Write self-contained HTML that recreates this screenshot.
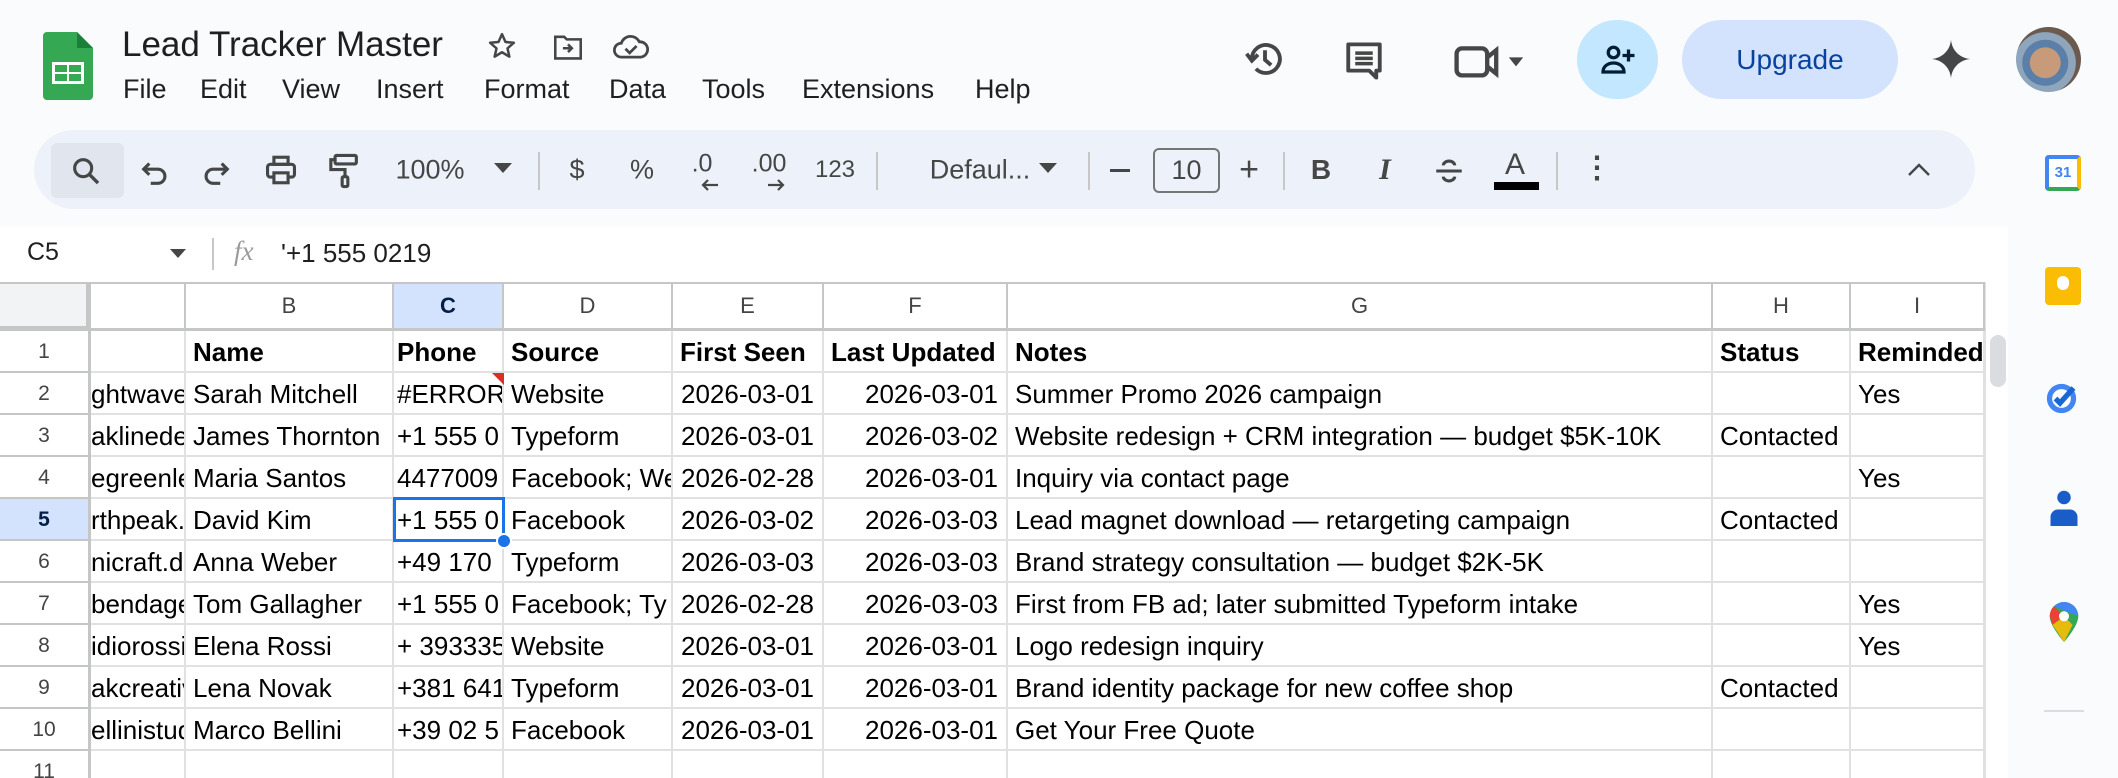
<!DOCTYPE html>
<html><head><meta charset="utf-8"><style>
*{margin:0;padding:0;box-sizing:border-box}
body{width:2118px;height:778px;overflow:hidden;background:#f9fbfd;font-family:"Liberation Sans",Arial,sans-serif;position:relative;color:#1f1f1f}
.a{position:absolute}
.menu span{position:absolute;top:74px;font-size:27px;color:#1f1f1f}
.tb{position:absolute;top:170px;transform:translate(-50%,-50%);font-size:27px;color:#444746}
.sep{position:absolute;top:152px;width:2px;height:38px;background:#c7c7c7}
.grid{position:absolute;left:0;top:282px;width:1985px;height:496px;background:#fff;overflow:hidden}
.row{position:absolute;left:0;width:1985px;height:42px}
.row div{position:absolute;top:0;height:42px;line-height:42px;font-size:26px;color:#000;white-space:nowrap;overflow:hidden;padding-left:7px;border-right:2px solid #e1e1e1;border-bottom:2px solid #e1e1e1}
.row .n{left:0;width:91px;padding:0;font-size:21px;color:#444;text-align:center;border-right:3px solid #c4c7c5;border-bottom:2px solid #c4c7c5}
.row .c0{left:91px;width:95px;text-align:right;padding:0 2px 0 0}
.row .c1{left:186px;width:208px}
.row .c2{left:394px;width:110px;padding-left:3px}
.row .c3{left:504px;width:169px}
.row .c4{left:673px;width:151px;text-align:right;padding:0 8px 0 0}
.row .c5{left:824px;width:184px;text-align:right;padding:0 8px 0 0}
.row .c6{left:1008px;width:705px}
.row .c7{left:1713px;width:138px}
.row .c8{left:1851px;width:134px}
.row.h div{font-weight:bold}
.row.h .c4,.row.h .c5{text-align:left;padding:0 0 0 7px}
.row.h .n{font-weight:normal}
.hd{position:absolute;top:0;height:49px;line-height:48px;font-size:22px;color:#444;text-align:center;border-right:2px solid #c4c7c5;border-bottom:3px solid #c4c7c5;background:#fff}
</style></head><body>
<svg class="a" style="left:43px;top:32px" width="50" height="68" viewBox="0 0 50 68"><path d="M4 0H34L50 16V64a4 4 0 0 1-4 4H4a4 4 0 0 1-4-4V4a4 4 0 0 1 4-4z" fill="#34a853"/><path d="M34 0V16H50z" fill="#188038"/><rect x="9" y="30" width="32" height="22" fill="#fff"/><rect x="12" y="33" width="12" height="7" fill="#34a853"/><rect x="26" y="33" width="12" height="7" fill="#34a853"/><rect x="12" y="42" width="12" height="7" fill="#34a853"/><rect x="26" y="42" width="12" height="7" fill="#34a853"/></svg>
<div class="a" style="left:122px;top:25px;font-size:35px;color:#1f1f1f">Lead Tracker Master</div>
<svg class="a" style="left:487px;top:31px" width="30" height="30" viewBox="0 0 24 24"><path d="M12 2.5l2.8 6.3 6.7.6-5.1 4.5 1.5 6.6L12 17l-5.9 3.5 1.5-6.6L2.5 9.4l6.7-.6z" fill="none" stroke="#444746" stroke-width="2" stroke-linejoin="round"/></svg>
<svg class="a" style="left:552px;top:33px" width="32" height="28" viewBox="0 0 24 22"><path d="M2 3h7l2 2h11v15H2z" fill="none" stroke="#444746" stroke-width="2"/><path d="M8 12h7M12 9l3 3-3 3" fill="none" stroke="#444746" stroke-width="2"/></svg>
<svg class="a" style="left:613px;top:32px" width="36" height="28" viewBox="0 0 26 20"><path d="M6 18a5 5 0 0 1 0-10 7 7 0 0 1 13-1 5.5 5.5 0 0 1 1 11z" fill="none" stroke="#444746" stroke-width="2"/><path d="M9 12l3 3 5-5" fill="none" stroke="#444746" stroke-width="2"/></svg>
<div class="menu">
<span style="left:123px">File</span><span style="left:200px">Edit</span><span style="left:282px">View</span><span style="left:376px">Insert</span><span style="left:484px">Format</span><span style="left:609px">Data</span><span style="left:702px">Tools</span><span style="left:802px">Extensions</span><span style="left:975px">Help</span>
</div>
<svg class="a" style="left:1244px;top:38px" width="42" height="42" viewBox="0 0 24 24"><path d="M4.5 12a8 8 0 1 1 2.3 5.6" fill="none" stroke="#444746" stroke-width="2.2"/><path d="M1.5 9l3 4 3.5-3.5" fill="none" stroke="#444746" stroke-width="2.2"/><path d="M12 7v5.5l3.5 3" fill="none" stroke="#444746" stroke-width="2.2"/></svg>
<svg class="a" style="left:1343px;top:39px" width="42" height="44" viewBox="0 0 24 25"><path d="M3 3h18v15H19v4l-4-4H3z" fill="none" stroke="#444746" stroke-width="2.2" stroke-linejoin="round"/><path d="M7 8h10M7 11h10M7 14h10" stroke="#444746" stroke-width="2"/></svg>
<svg class="a" style="left:1453px;top:43px" width="72" height="36" viewBox="0 0 40 20"><rect x="2" y="3" width="17" height="15" rx="3" fill="none" stroke="#444746" stroke-width="2.4"/><path d="M19 8l5-4v13l-5-4" fill="none" stroke="#444746" stroke-width="2.4"/><path d="M31 8h8l-4 5z" fill="#444746"/></svg>
<div class="a" style="left:1577px;top:20px;width:81px;height:79px;border-radius:40px;background:#c2e7ff"></div>
<svg class="a" style="left:1599px;top:42px" width="38" height="36" viewBox="0 0 24 24"><circle cx="9" cy="7" r="3.5" fill="none" stroke="#001d35" stroke-width="2.2"/><path d="M2 20c0-4 3.5-6 7-6s7 2 7 6z" fill="none" stroke="#001d35" stroke-width="2.2"/><path d="M19 5v8M15 9h8" stroke="#001d35" stroke-width="2.2"/></svg>
<div class="a" style="left:1682px;top:20px;width:216px;height:79px;border-radius:40px;background:#d3e3fd;color:#0842a0;font-size:28px;text-align:center;line-height:79px">Upgrade</div>
<svg class="a" style="left:1930px;top:38px" width="42" height="42" viewBox="0 0 24 24"><path d="M12 1C12.5 7 17 11.5 23 12 17 12.5 12.5 17 12 23 11.5 17 7 12.5 1 12 7 11.5 11.5 7 12 1z" fill="#444746"/></svg>
<div class="a" style="left:2016px;top:27px;width:65px;height:65px;border-radius:50%;background:radial-gradient(circle at 45% 55%,#c79a7a 0 30%,#5a7fa8 31% 45%,#8fa5bb 46% 60%,#6b5a4d 61%)"></div>
<div class="a" style="left:34px;top:130px;width:1941px;height:79px;border-radius:40px;background:#edf2fa"></div>
<div class="a" style="left:51px;top:143px;width:73px;height:55px;border-radius:6px;background:#e1e6ee"></div>
<svg class="a" style="left:69px;top:154px" width="34" height="34" viewBox="0 0 24 24"><circle cx="10" cy="10" r="6" fill="none" stroke="#444746" stroke-width="2.2"/><path d="M14.5 14.5l6 6" stroke="#444746" stroke-width="2.4"/></svg>
<svg class="a" style="left:138px;top:155px" width="34" height="34" viewBox="0 0 24 24"><path d="M8 6L4 10l4 4" fill="none" stroke="#444746" stroke-width="2.2"/><path d="M4 10h10a5 5 0 0 1 0 10H9" fill="none" stroke="#444746" stroke-width="2.2"/></svg>
<svg class="a" style="left:199px;top:155px" width="34" height="34" viewBox="0 0 24 24"><path d="M16 6l4 4-4 4" fill="none" stroke="#444746" stroke-width="2.2"/><path d="M20 10H10a5 5 0 0 0 0 10h5" fill="none" stroke="#444746" stroke-width="2.2"/></svg>
<svg class="a" style="left:264px;top:153px" width="34" height="34" viewBox="0 0 24 24"><rect x="7" y="3" width="10" height="5" fill="none" stroke="#444746" stroke-width="2.2"/><rect x="2.5" y="8" width="19" height="9" rx="2" fill="none" stroke="#444746" stroke-width="2.2"/><rect x="7" y="14" width="10" height="7" fill="#edf2fa" stroke="#444746" stroke-width="2.2"/></svg>
<svg class="a" style="left:328px;top:152px" width="34" height="38" viewBox="0 0 24 26"><rect x="5" y="2" width="15" height="6" rx="1" fill="none" stroke="#444746" stroke-width="2.2"/><path d="M5 5H2v7h10v5" fill="none" stroke="#444746" stroke-width="2.2"/><rect x="10" y="17" width="4" height="7" rx="1" fill="none" stroke="#444746" stroke-width="2.2"/></svg>
<div class="tb" style="left:430px">100%</div>
<svg class="a" style="left:494px;top:163px" width="18" height="12"><path d="M0 0h18l-9 10z" fill="#444746"/></svg>
<div class="sep" style="left:538px"></div>
<div class="tb" style="left:577px">$</div>
<div class="tb" style="left:642px">%</div>
<div class="tb" style="left:702px;font-size:25px;top:164px">.0</div>
<svg class="a" style="left:700px;top:178px" width="20" height="14" viewBox="0 0 20 14"><path d="M18 7H3M8 2L3 7l5 5" fill="none" stroke="#444746" stroke-width="2.2"/></svg>
<div class="tb" style="left:769px;font-size:25px;top:164px">.00</div>
<svg class="a" style="left:766px;top:178px" width="20" height="14" viewBox="0 0 20 14"><path d="M2 7h15M12 2l5 5-5 5" fill="none" stroke="#444746" stroke-width="2.2"/></svg>
<div class="tb" style="left:835px;font-size:24px">123</div>
<div class="sep" style="left:876px"></div>
<div class="tb" style="left:980px">Defaul...</div>
<svg class="a" style="left:1039px;top:163px" width="18" height="12"><path d="M0 0h18l-9 10z" fill="#444746"/></svg>
<div class="sep" style="left:1088px"></div>
<div class="a" style="left:1110px;top:169px;width:20px;height:3px;background:#444746"></div>
<div class="a" style="left:1153px;top:148px;width:67px;height:45px;border:2px solid #747775;border-radius:6px;font-size:27px;line-height:41px;text-align:center;color:#444746">10</div>
<div class="tb" style="left:1249px;font-size:34px">+</div>
<div class="sep" style="left:1283px"></div>
<div class="tb" style="left:1321px;font-size:28px;font-weight:bold">B</div>
<div class="tb" style="left:1385px;font-size:30px;font-style:italic;font-family:'Liberation Serif',serif;font-weight:bold">I</div>
<svg class="a" style="left:1432px;top:154px" width="34" height="34" viewBox="0 0 24 24"><path d="M3 12h18" stroke="#444746" stroke-width="2.2"/><path d="M8 8a4 3 0 0 1 8 0M8 16a4 3 0 0 0 8 0" fill="none" stroke="#444746" stroke-width="2.2"/></svg>
<div class="tb" style="left:1515px;top:165px;font-size:30px">A</div>
<div class="a" style="left:1494px;top:182px;width:45px;height:8px;background:#000"></div>
<div class="sep" style="left:1556px"></div>
<div class="tb" style="left:1597px;font-size:30px;top:168px;font-weight:bold">⋮</div>
<svg class="a" style="left:1907px;top:163px" width="24" height="14"><path d="M2 12L12 2l10 10" fill="none" stroke="#444746" stroke-width="2.4"/></svg>
<div class="a" style="left:0;top:226px;width:2008px;height:56px;background:#fff"></div>
<div class="a" style="left:27px;top:238px;font-size:25px">C5</div>
<svg class="a" style="left:170px;top:249px" width="16" height="10"><path d="M0 0h16l-8 9z" fill="#444746"/></svg>
<div class="a" style="left:212px;top:238px;width:2px;height:32px;background:#c7c7c7"></div>
<div class="a" style="left:234px;top:236px;font-size:27px;font-style:italic;color:#9a9a9a;font-family:'Liberation Serif',serif">fx</div>
<div class="a" style="left:281px;top:238px;font-size:26px">'+1 555 0219</div>
<div class="grid">
<div class="a" style="left:0;top:0;width:1985px;height:2px;background:#c4c7c5;z-index:2"></div>
<div class="hd" style="left:0;width:91px;background:#f1f3f4;border-right:5px solid #c4c7c5;border-bottom:5px solid #c4c7c5"></div>
<div class="hd" style="left:91px;width:95px"></div>
<div class="hd" style="left:186px;width:208px">B</div>
<div class="hd" style="left:394px;width:110px;background:#d3e3fd;font-weight:bold;color:#041e49">C</div>
<div class="hd" style="left:504px;width:169px">D</div>
<div class="hd" style="left:673px;width:151px">E</div>
<div class="hd" style="left:824px;width:184px">F</div>
<div class="hd" style="left:1008px;width:705px">G</div>
<div class="hd" style="left:1713px;width:138px">H</div>
<div class="hd" style="left:1851px;width:134px">I</div>

<div class="row h" style="top:49px"><div class="n">1</div><div class="c0"></div><div class="c1">Name</div><div class="c2">Phone</div><div class="c3">Source</div><div class="c4">First Seen</div><div class="c5">Last Updated</div><div class="c6">Notes</div><div class="c7">Status</div><div class="c8">Reminded</div></div>
<div class="row" style="top:91px"><div class="n">2</div><div class="c0">ghtwave</div><div class="c1">Sarah Mitchell</div><div class="c2">#ERROR</div><div class="c3">Website</div><div class="c4">2026-03-01</div><div class="c5">2026-03-01</div><div class="c6">Summer Promo 2026 campaign</div><div class="c7"></div><div class="c8">Yes</div></div>
<div class="row" style="top:133px"><div class="n">3</div><div class="c0">aklinedes</div><div class="c1">James Thornton</div><div class="c2">+1 555 0</div><div class="c3">Typeform</div><div class="c4">2026-03-01</div><div class="c5">2026-03-02</div><div class="c6">Website redesign + CRM integration — budget $5K-10K</div><div class="c7">Contacted</div><div class="c8"></div></div>
<div class="row" style="top:175px"><div class="n">4</div><div class="c0">egreenle</div><div class="c1">Maria Santos</div><div class="c2">4477009</div><div class="c3">Facebook; We</div><div class="c4">2026-02-28</div><div class="c5">2026-03-01</div><div class="c6">Inquiry via contact page</div><div class="c7"></div><div class="c8">Yes</div></div>
<div class="row" style="top:217px"><div class="n" style="background:#d3e3fd;font-weight:bold;color:#041e49">5</div><div class="c0">rthpeak.</div><div class="c1">David Kim</div><div class="c2">+1 555 0</div><div class="c3">Facebook</div><div class="c4">2026-03-02</div><div class="c5">2026-03-03</div><div class="c6">Lead magnet download — retargeting campaign</div><div class="c7">Contacted</div><div class="c8"></div></div>
<div class="row" style="top:259px"><div class="n">6</div><div class="c0">nicraft.de</div><div class="c1">Anna Weber</div><div class="c2">+49 170</div><div class="c3">Typeform</div><div class="c4">2026-03-03</div><div class="c5">2026-03-03</div><div class="c6">Brand strategy consultation — budget $2K-5K</div><div class="c7"></div><div class="c8"></div></div>
<div class="row" style="top:301px"><div class="n">7</div><div class="c0">bendage</div><div class="c1">Tom Gallagher</div><div class="c2">+1 555 0</div><div class="c3">Facebook; Ty</div><div class="c4">2026-02-28</div><div class="c5">2026-03-03</div><div class="c6">First from FB ad; later submitted Typeform intake</div><div class="c7"></div><div class="c8">Yes</div></div>
<div class="row" style="top:343px"><div class="n">8</div><div class="c0">idiorossi</div><div class="c1">Elena Rossi</div><div class="c2">+ 393335</div><div class="c3">Website</div><div class="c4">2026-03-01</div><div class="c5">2026-03-01</div><div class="c6">Logo redesign inquiry</div><div class="c7"></div><div class="c8">Yes</div></div>
<div class="row" style="top:385px"><div class="n">9</div><div class="c0">akcreativ</div><div class="c1">Lena Novak</div><div class="c2">+381 641</div><div class="c3">Typeform</div><div class="c4">2026-03-01</div><div class="c5">2026-03-01</div><div class="c6">Brand identity package for new coffee shop</div><div class="c7">Contacted</div><div class="c8"></div></div>
<div class="row" style="top:427px"><div class="n">10</div><div class="c0">ellinistud</div><div class="c1">Marco Bellini</div><div class="c2">+39 02 5</div><div class="c3">Facebook</div><div class="c4">2026-03-01</div><div class="c5">2026-03-01</div><div class="c6">Get Your Free Quote</div><div class="c7"></div><div class="c8"></div></div>
<div class="row" style="top:469px"><div class="n">11</div><div class="c0"></div><div class="c1"></div><div class="c2"></div><div class="c3"></div><div class="c4"></div><div class="c5"></div><div class="c6"></div><div class="c7"></div><div class="c8"></div></div>

<div class="a" style="left:492px;top:91px;width:0;height:0;border-left:12px solid transparent;border-top:12px solid #d93025"></div>
<div class="a" style="left:393px;top:215px;width:112px;height:45px;border:3px solid #1a73e8"></div>
<div class="a" style="left:496px;top:251px;width:16px;height:16px;border-radius:50%;background:#1a73e8;border:2px solid #fff"></div>
</div>
<div class="a" style="left:1985px;top:282px;width:23px;height:496px;background:#fff;border-left:1px solid #e1e1e1"></div>
<div class="a" style="left:1990px;top:335px;width:16px;height:52px;border-radius:8px;background:#dadce0"></div>
<div class="a" style="left:2045px;top:155px;width:36px;height:36px;border-radius:4px;background:#fff;border:4px solid #4285f4;border-bottom-color:#34a853;border-right-color:#fbbc04;font-size:15px;text-align:center;line-height:28px;color:#4285f4;font-weight:bold">31</div>
<div class="a" style="left:2045px;top:267px;width:36px;height:38px;border-radius:4px;background:#fbbc04"></div>
<div class="a" style="left:2057px;top:276px;width:12px;height:14px;border-radius:6px;background:#fff"></div>
<svg class="a" style="left:2045px;top:379px" width="36" height="36" viewBox="0 0 24 24"><circle cx="11" cy="13" r="8" fill="none" stroke="#4285f4" stroke-width="3.5"/><path d="M7 13l3 3 9-10" fill="none" stroke="#1967d2" stroke-width="3.5"/></svg>
<svg class="a" style="left:2049px;top:490px" width="30" height="36" viewBox="0 0 20 24"><circle cx="10" cy="5" r="4.5" fill="#1a5dc9"/><path d="M1 24v-6a5 5 0 0 1 5-5h8a5 5 0 0 1 5 5v6z" fill="#1a5dc9"/></svg>
<svg class="a" style="left:2049px;top:602px" width="30" height="40" viewBox="0 0 20 28"><path d="M10 0a10 10 0 0 1 10 10c0 7-10 18-10 18S0 17 0 10A10 10 0 0 1 10 0z" fill="#34a853"/><path d="M10 0a10 10 0 0 1 10 10L3 3A10 10 0 0 1 10 0z" fill="#4285f4"/><path d="M0 10A10 10 0 0 1 3 3l7 7-8 6z" fill="#ea4335"/><path d="M2 16l8-6 6 6-6 12z" fill="#fbbc04" opacity=".9"/><circle cx="10" cy="10" r="3.5" fill="#fff"/></svg>
<div class="a" style="left:2044px;top:710px;width:40px;height:2px;background:#dadce0"></div>
</body></html>
